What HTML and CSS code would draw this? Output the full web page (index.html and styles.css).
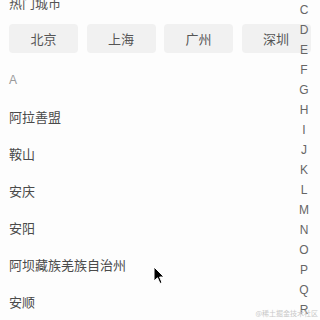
FILE: index.html
```html
<!DOCTYPE html>
<html lang="zh-CN">
<head>
<meta charset="utf-8">
<link rel="stylesheet" href="styles.css">
</head>
<body>
<div class="page">
  <div class="title">热门城市</div>
  <div class="hot">
    <div class="hot-btn">北京</div>
    <div class="hot-btn">上海</div>
    <div class="hot-btn">广州</div>
    <div class="hot-btn">深圳</div>
  </div>
  <div class="group">
    <div class="group-label">A</div>
    <div class="city">阿拉善盟</div>
    <div class="city">鞍山</div>
    <div class="city">安庆</div>
    <div class="city">安阳</div>
    <div class="city">阿坝藏族羌族自治州</div>
    <div class="city">安顺</div>
  </div>
</div>
<ul class="index">
  <li>A</li><li>B</li><li>C</li><li>D</li><li>E</li><li>F</li><li>G</li><li>H</li><li>I</li><li>J</li><li>K</li><li>L</li><li>M</li><li>N</li><li>O</li><li>P</li><li>Q</li><li>R</li>
</ul>
<svg class="cursor" width="12" height="19" viewBox="0 0 12 19">
  <path d="M1 1 L1 15 L4.5 11.8 L7 17.5 L9 16.6 L6.6 11 L11 11 Z" fill="#000" stroke="#fff" stroke-width="1" stroke-linejoin="round"/>
</svg>
<div class="watermark">@稀土掘金技术社区</div>
</body>
</html>
```
FILE: styles.css
```css
html, body {
  margin: 0;
  padding: 0;
  background: #fdfdfd;
  overflow: hidden;
  height: 320px;
  font-family: "Noto Sans CJK SC", "Liberation Sans", sans-serif;
}

.page {
  margin-top: -7px;
}

.title {
  padding-left: 9px;
  font-size: 13px;
  line-height: 20px;
  height: 20px;
  color: #555;
}

.hot {
  margin-top: 11px;
  padding-left: 9px;
  display: grid;
  grid-template-columns: repeat(4, 69px);
  column-gap: 8.5px;
}

.hot-btn {
  height: 29px;
  background: #f1f1f1;
  border-radius: 4px;
  display: flex;
  align-items: center;
  justify-content: center;
  font-size: 13px;
  color: #555;
}

.group {
  margin-top: 8.5px;
}

.group-label {
  height: 37px;
  line-height: 37px;
  padding-left: 9px;
  font-family: "Liberation Sans", sans-serif;
  font-size: 12px;
  color: #9a9a9a;
}

.city {
  height: 37px;
  line-height: 35px;
  padding-left: 9px;
  font-size: 13px;
  color: #4a4a4a;
}

.index {
  position: absolute;
  top: -40px;
  left: 292px;
  width: 24px;
  margin: 0;
  padding: 0;
  list-style: none;
  font-family: "Liberation Sans", sans-serif;
  font-size: 12px;
  color: #666;
  text-align: center;
}

.index li {
  height: 20px;
  line-height: 20px;
}

.cursor {
  position: absolute;
  left: 153px;
  top: 266px;
}

.watermark {
  position: absolute;
  right: 2px;
  bottom: 3px;
  font-size: 7px;
  line-height: 8px;
  color: #c8c8c8;
}
```
